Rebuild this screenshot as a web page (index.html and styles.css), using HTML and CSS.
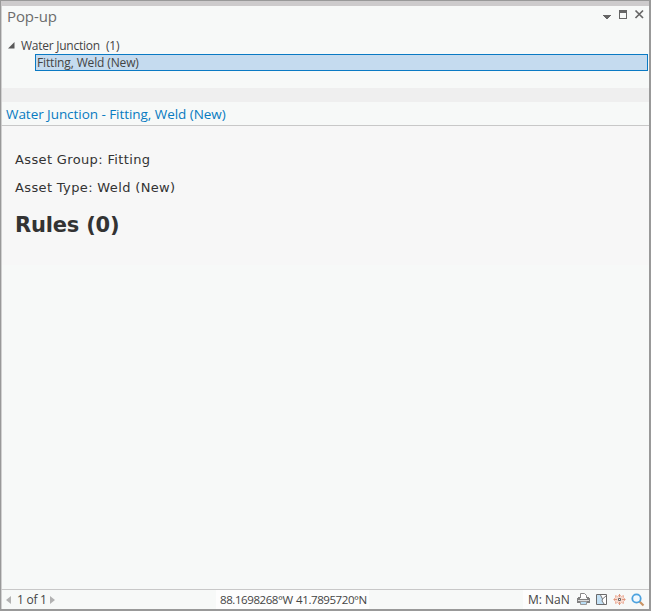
FILE: index.html
```html
<!DOCTYPE html>
<html lang="en">
<head>
<meta charset="utf-8">
<title>Pop-up</title>
<link rel="stylesheet" href="styles.css">
</head>
<body>
<main class="window">
  <header class="titlebar">
    <h1 class="title">Pop-up</h1>
    <svg class="controls" width="44" height="14" viewBox="0 0 44 14" shape-rendering="crispEdges">
      <path d="M0 6h8v1h-1v1h-1v1h-1v1h-2v-1h-1v-1h-1v-1h-1z" fill="#666"/>
      <path d="M16 1h8v9h-8zM17 4v5h6v-5z" fill="#666" fill-rule="evenodd"/>
      <path d="M32.500 1.500l7.500 7.500M40 1.500l-7.500 7.500" stroke="#666" stroke-width="1.700" fill="none" shape-rendering="auto"/>
    </svg>
  </header>
  <section class="tree">
    <div class="group">
      <svg class="expander" width="7" height="7" viewBox="0 0 7 7"><path d="M6.500 0v6.500H0z" fill="#595959"/></svg>
      <span class="group-name">Water Junction</span><span class="count">(1)</span>
    </div>
    <div class="item"><span>Fitting, Weld (New)</span></div>
  </section>
  <div class="splitter"></div>
  <h2 class="heading"><span>Water Junction - Fitting, Weld (New)</span></h2>
  <section class="content">
    <p class="group-line">Asset Group: Fitting</p>
    <p class="type-line">Asset Type: Weld (New)</p>
    <h3 class="rules">Rules (0)</h3>
  </section>
  <footer class="status">
    <svg class="prev" width="5" height="8" viewBox="0 0 5 8"><path d="M5 0v8L0 4z" fill="#b2b2b2"/></svg>
    <span class="page">1 of 1</span>
    <svg class="next" width="5" height="8" viewBox="0 0 5 8"><path d="M0 0v8l5-4z" fill="#b2b2b2"/></svg>
    <span class="coords"><span>88.1698268°W 41.7895720°N</span></span>
    <span class="measure"><span>M: NaN</span></span>
    <svg class="tools" width="68" height="14" viewBox="0 0 68 14">
      <path d="M3.500 5V.5h4l2 2V5" fill="#fff" stroke="#888"/>
      <path d="M1 4h2v2h7V4h2v1h1v5H0V5h1z" fill="#808080"/>
      <path d="M1 7h11v1H1z" fill="#ddd"/>
      <path d="M3.500 8.500h6v3h-6z" fill="#b9ddf4" stroke="#999"/>
      <g transform="translate(1 0)">
        <path d="M18.500 1.500h10v10h-10z" fill="#fff"/>
        <path d="M19 2h3l3 4-1 2 2 3h-7z" fill="#c3e1f5"/>
        <path d="M22.500 2l2 4 4-3.500M24.500 6l-.5 2 2.500 3.500" fill="none" stroke="#777"/>
        <path d="M18.500 1.500h10v10h-10z" fill="none" stroke="#6b6b6b"/>
      </g>
      <path d="M38 2l2 1 2-2 2 2 2-1v2l2 2-2 2v2l-2-1-2 2-2-2-2 1V8l-2-2 2-2z" transform="translate(.5 .5)" fill="#f7dacf" stroke="#ebb5a2"/>
      <path d="M42.500 1v3M42.500 9v3M37 6.500h3M45 6.500h3" stroke="#df967c"/>
      <path d="M41.500 5.500h2v2h-2z" fill="#fff" stroke="#666"/>
      <path d="M62.500 8.500l4 4" stroke="#c99363" stroke-width="2.200"/>
      <circle cx="59.500" cy="5.500" r="4.200" fill="#f1f9fe" stroke="#4ba2df" stroke-width="1.800"/>
    </svg>
  </footer>
</main>
</body>
</html>
```
FILE: styles.css
```css
* { box-sizing: border-box; }
body { margin: 0; background: #f7f9f8; }
.window {
  display: flex; flex-direction: column; height: 611px;
  border: 1px solid #999; border-right-width: 2px; border-bottom-width: 2px;
  box-shadow: inset 1px 0 #d0d0d0;
  font-family: "Open Sans", "Noto Sans", sans-serif; font-size: 12px; color: #444;
  white-space: nowrap;
}
h1, h2, h3, p { margin: 0; font-weight: 400; }
.titlebar { display: flex; justify-content: space-between; height: 36px; border-top: 5px solid #cdcbcc; padding: 0 2px 0 6px; }
.title { font-size: 15px; line-height: 20px; color: #6c6c6c; letter-spacing: -.1px; }
.controls { margin-top: 3px; }
.tree { height: 51px; padding: 0 1px 0 7px; }
.group { display: flex; height: 17px; line-height: 17px; }
.expander { margin: 5px 6px 0 0; }
.group-name { width: 85px; letter-spacing: -.25px; }
.count { letter-spacing: -.2px; }
.item { height: 17px; margin-left: 27px; padding-left: 1px; border: 1px solid #0a7ac4; background: #c5dbef; line-height: 15px; letter-spacing: -.14px; }
.splitter { height: 14px; margin-left: 1px; background: #efefef; }
.heading { height: 24px; padding-left: 5px; border-bottom: 1px solid #c8c8c8; color: #087bc1; font-size: 13.500px; line-height: 24px; letter-spacing: -.05px; }
.content { height: 139px; margin-left: 1px; padding: 24px 13px 0; background: #f7f7f7; color: #333; font-family: "DejaVu Sans", sans-serif; font-size: 13px; }
.group-line, .type-line { height: 28px; line-height: 20px; letter-spacing: .36px; }
.rules { font-size: 21px; line-height: 38px; font-weight: 700; letter-spacing: -.2px; }
.status { display: flex; height: 20px; margin-top: auto; border-top: 1px solid #c8c8c8; line-height: 19px; }
.prev { margin: 6px 6px 0 5px; }
.page { width: 33px; letter-spacing: -.25px; }
.next { margin-top: 6px; }
.coords { width: 153px; margin-left: 161px; padding-left: 4px; background: #fdfdfd; font-size: 11.500px; letter-spacing: -.42px; word-spacing: .8px; }
.measure { width: 47px; margin-left: 154px; padding-left: 5px; background: #fdfdfd; }
.tools { margin: 3px 0 0 7px; }
```
